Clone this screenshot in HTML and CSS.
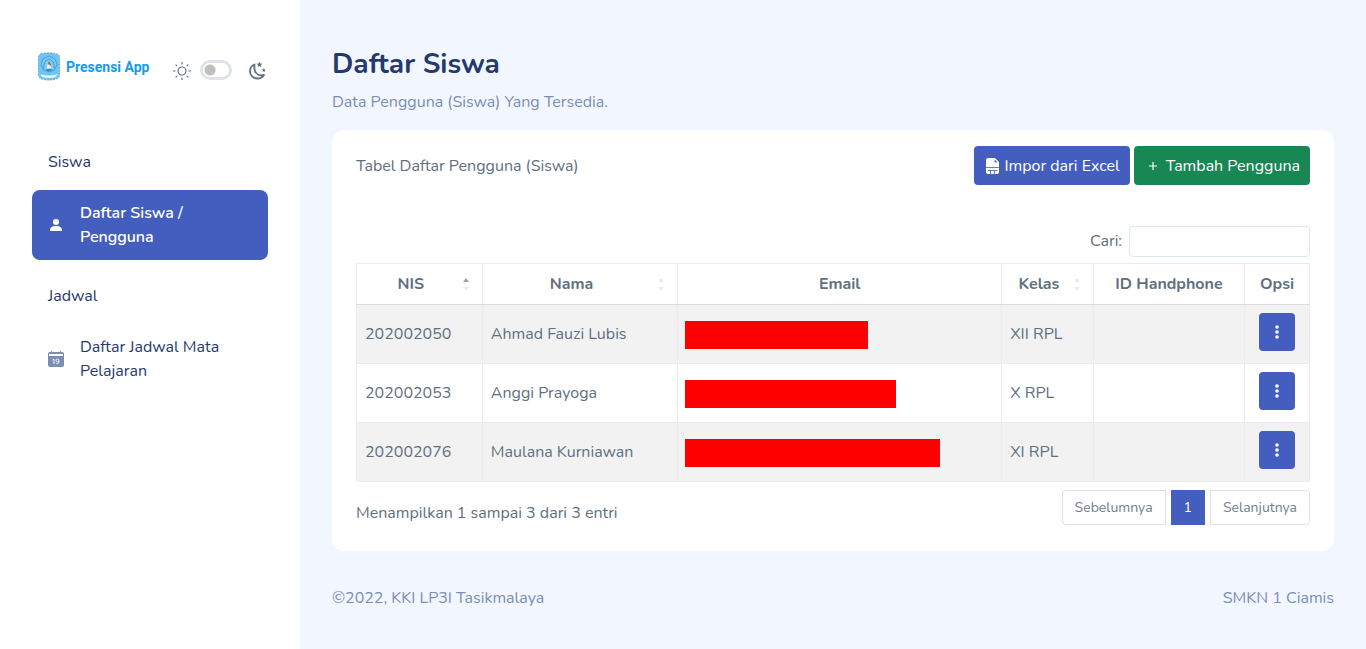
FILE: index.html
```
<!DOCTYPE html>
<html lang="id">
<head>
<meta charset="utf-8">
<meta name="viewport" content="width=device-width, initial-scale=1">
<title>Daftar Siswa - Presensi App</title>
<link rel="stylesheet" href="styles.css">
</head>
<body>
<div class="app">
  <aside class="sidebar">
    <div class="sidebar-header">
      <a class="brand" href="#">
        <svg class="brand-logo" viewBox="0 0 22 28" aria-hidden="true">
          <path d="M3 1.500Q11-.8 19 1.500 21.500 2 21.500 5V22Q21.500 26 17 26.800 11 28.400 5 26.800.5 26 .5 22V5Q.5 2 3 1.500Z" fill="#6cc6f7" stroke="#6f97ac" stroke-width=".8" stroke-dasharray="2 1"/>
          <path d="M11 3.500 17 6.500 19 12 16.500 17.500 11 19.500 5.500 17.500 3 12 5 6.500Z" fill="#7fcdf8" stroke="#3c9bd8" stroke-width=".9"/>
          <path d="M6 16Q4.500 9 11 6.500 17.500 9 16 16" fill="none" stroke="#3a8cc4" stroke-width=".9"/>
          <path d="M11 7.500 13.500 16H8.500Z" fill="#e8f3f5"/>
          <path d="M10 9h2v3h-2z" fill="#6f868c"/>
          <path d="M11.500 11h1.500v2h-1.500z" fill="#d65342"/>
          <path d="M7 17.500Q11 15 15 17.500L11 19Z" fill="#2b91d0"/>
          <path d="M2.500 21.500Q11 24.500 19.500 21.500L18 24.500Q11 26.500 4 24.500Z" fill="#e8f7fd"/>
        </svg>
        <span>Presensi App</span>
      </a>
      <div class="theme">
        <svg class="theme-icon" viewBox="0 0 20 20" aria-hidden="true">
          <circle cx="10" cy="11" r="4" fill="none" stroke="#607080" stroke-width="1.200"/>
          <path d="M10 2v2.500M10 17.500v2.500M1 11h2.500M16.500 11h2.500M3.600 4.600l1.600 1.600M14.800 15.800l1.600 1.600M3.600 17.400l1.600-1.600M14.800 6.200l1.600-1.600" stroke="#607080" stroke-width="1.200"/>
        </svg>
        <input class="switch" type="checkbox" role="switch" aria-label="Mode gelap">
        <svg class="theme-icon moon" viewBox="0 0 20 20" aria-hidden="true">
          <path d="M6.500 4.500C3.500 5.800 2 8.300 2 11.300 2 15.500 5.200 18.500 9.300 18.500c3 0 5.300-1.300 6.700-3.500-4.700 1-8.200-1-9.200-4.600-.5-2-.5-4-.3-5.900Z" fill="none" stroke="#607080" stroke-width="1.800" stroke-linejoin="round"/>
          <path d="m11.500 1.500.8 2.100 2.200.1-1.700 1.400.6 2.200-1.900-1.200-1.900 1.200.6-2.200-1.700-1.400 2.200-.1ZM15.800 8l.6 1.400 1.500.1-1.200 1 .4 1.500-1.300-.8-1.300.8.4-1.500-1.200-1 1.500-.1Z" fill="#607080"/>
        </svg>
      </div>
    </div>
    <nav class="menu">
      <h2 class="menu-title">Siswa</h2>
      <a class="menu-item active" href="#" aria-current="page">
        <svg class="menu-icon" viewBox="0 0 16 16" aria-hidden="true">
          <circle cx="8" cy="5" r="3" fill="currentColor"/>
          <path d="M2 14C1.500 11 3.500 9 8 9S14.500 11 14 14Z" fill="currentColor"/>
        </svg>
        <span>Daftar Siswa / Pengguna</span>
      </a>
      <h2 class="menu-title">Jadwal</h2>
      <a class="menu-item" href="#">
        <svg class="menu-icon" viewBox="0 0 16 16" aria-hidden="true">
          <path d="M3 0h1v1h8V0h1v1h1q2 0 2 2H0Q0 1 2 1h1ZM0 5h16v9q0 2-2 2H2q-2 0-2-2ZM0 2h1v4H0ZM15 2h1v4h-1Z" fill="currentColor"/>
          <path d="M4.500 9 6 8v5" fill="none" stroke="#fff" stroke-width=".9"/>
          <circle cx="9.500" cy="9.400" r="1.400" fill="none" stroke="#fff" stroke-width=".8"/>
          <path d="M11 9.500q.2 3.500-1.600 3.300-1 0-1.300-.9" fill="none" stroke="#fff" stroke-width=".8"/>
        </svg>
        <span>Daftar Jadwal Mata Pelajaran</span>
      </a>
    </nav>
  </aside>

  <main class="main">
    <h1 class="page-title">Daftar Siswa</h1>
    <p class="page-subtitle">Data Pengguna (Siswa) Yang Tersedia.</p>

    <section class="card">
      <header class="card-header">
        <span>Tabel Daftar Pengguna (Siswa)</span>
        <div class="actions">
          <button class="btn btn-primary" type="button">
            <svg class="btn-icon" viewBox="0 0 14 16" aria-hidden="true">
              <path d="M2 0h7l4 4v10q0 2-2 2H2q-2 0-2-2V2Q0 0 2 0Z" fill="currentColor"/>
              <path d="M8.500 1.500v2q0 1 1 1h2Z" fill="#435ebe"/>
              <path d="M0 9.500h13M2 12.500h9.500M4.500 12.500V16M8.500 12.500V16" stroke="#435ebe" stroke-width=".8"/>
            </svg>
            Impor dari Excel
          </button>
          <button class="btn btn-success" type="button">
            <svg class="btn-icon" viewBox="0 0 14 16" aria-hidden="true">
              <path d="M7 4v8M3 8h8" stroke="currentColor" stroke-width="1.200"/>
            </svg>
            Tambah Pengguna
          </button>
        </div>
      </header>

      <div class="card-body">
        <div class="search">
          <label for="search">Cari:</label>
          <input id="search" class="search-input" type="search">
        </div>

        <table class="table">
          <colgroup>
            <col class="col-nis"><col class="col-name"><col class="col-email"><col class="col-class"><col class="col-phone"><col class="col-option">
          </colgroup>
          <thead>
            <tr>
              <th scope="col" class="sortable asc" aria-sort="ascending"><span class="sort">NIS<span class="arrows"></span></span></th>
              <th scope="col" class="sortable"><span class="sort">Nama<span class="arrows"></span></span></th>
              <th scope="col">Email</th>
              <th scope="col" class="sortable"><span class="sort">Kelas<span class="arrows"></span></span></th>
              <th scope="col">ID Handphone</th>
              <th scope="col">Opsi</th>
            </tr>
          </thead>
          <tbody>
            <tr>
              <td>202002050</td>
              <td>Ahmad Fauzi Lubis</td>
              <td class="email"><div class="redacted redacted-short"></div></td>
              <td>XII RPL</td>
              <td></td>
              <td class="option"><button class="btn btn-primary btn-more" type="button" aria-label="Opsi"><svg class="dots" viewBox="0 0 4 14" aria-hidden="true"><circle cx="2" cy="2" r="1.800"/><circle cx="2" cy="7" r="1.800"/><circle cx="2" cy="12" r="1.800"/></svg></button></td>
            </tr>
            <tr>
              <td>202002053</td>
              <td>Anggi Prayoga</td>
              <td class="email"><div class="redacted redacted-medium"></div></td>
              <td>X RPL</td>
              <td></td>
              <td class="option"><button class="btn btn-primary btn-more" type="button" aria-label="Opsi"><svg class="dots" viewBox="0 0 4 14" aria-hidden="true"><circle cx="2" cy="2" r="1.800"/><circle cx="2" cy="7" r="1.800"/><circle cx="2" cy="12" r="1.800"/></svg></button></td>
            </tr>
            <tr>
              <td>202002076</td>
              <td>Maulana Kurniawan</td>
              <td class="email"><div class="redacted redacted-long"></div></td>
              <td>XI RPL</td>
              <td></td>
              <td class="option"><button class="btn btn-primary btn-more" type="button" aria-label="Opsi"><svg class="dots" viewBox="0 0 4 14" aria-hidden="true"><circle cx="2" cy="2" r="1.800"/><circle cx="2" cy="7" r="1.800"/><circle cx="2" cy="12" r="1.800"/></svg></button></td>
            </tr>
          </tbody>
        </table>

        <div class="table-footer">
          <p class="info">Menampilkan 1 sampai 3 dari 3 entri</p>
          <nav class="pagination" aria-label="Halaman">
            <a class="page first" href="#">Sebelumnya</a>
            <a class="page current" href="#" aria-current="page">1</a>
            <a class="page last" href="#">Selanjutnya</a>
          </nav>
        </div>
      </div>
    </section>

    <footer class="footer">
      <p>©2022, KKI LP3I Tasikmalaya</p>
      <p>SMKN 1 Ciamis</p>
    </footer>
  </main>
</div>
</body>
</html>
```
FILE: styles.css
```
* { box-sizing: border-box; }

body {
  margin: 0;
  background: #f2f7ff;
  color: #607080;
  font: 400 16px/24px Nunito, "Open Sans", "Noto Sans", sans-serif;
}

h1, h2, p { margin: 0; }
a { color: inherit; text-decoration: none; }
button, input { font: inherit; }

.app { display: flex; min-height: 100vh; }

/* Sidebar */
.sidebar { flex: 0 0 300px; padding: 52px 32px 32px; background: #fff; }
.sidebar-header { display: flex; align-items: flex-start; justify-content: space-between; padding-left: 6px; }
.brand {
  display: flex; align-items: center; gap: 6px;
  color: #159aef;
  font: 700 14px/28px Roboto, sans-serif;
  white-space: nowrap;
}
.brand-logo { width: 22px; height: 29px; }
.theme { display: flex; align-items: center; gap: 8px; padding-top: 8px; }
.theme-icon { width: 20px; height: 20px; }
.moon { margin-left: 8px; }
.switch {
  appearance: none;
  width: 32px; height: 20px; margin: 0;
  border: 3px solid #dfe3ea; border-radius: 10px;
  background: radial-gradient(circle at 7px 50%, #bfbfbf 5px, #fff 6px);
}
.menu { margin-top: 65px; }
.menu-title {
  padding: 4px 16px;
  color: #25396f;
  font-size: 16px; font-weight: 400; line-height: 24px;
}
.menu-item + .menu-title { margin-top: 20px; }
.menu-item {
  display: flex; align-items: center; gap: 16px;
  margin-top: 12px; padding: 11px 16px;
  border-radius: 8px;
  color: #25396f;
}
.menu-icon { flex: none; width: 16px; height: 16px; color: #7c8db5; }
.menu-item.active { background: #435ebe; color: #fff; font-weight: 600; }
.active .menu-icon { color: #fff; }

/* Content */
.main { flex: 1; min-width: 0; padding: 47px 32px 32px; }
.page-title { color: #25396f; font-size: 28px; font-weight: 700; line-height: 34px; }
.page-subtitle { margin-top: 9px; color: #7c8db5; }
.card { margin-top: 16px; padding: 16px 24px 26px; border-radius: 12px; background: #fff; }
.card-header { display: flex; align-items: center; justify-content: space-between; }
.actions { display: flex; gap: 4px; }

.btn {
  display: inline-flex; align-items: center; justify-content: center; gap: 4px;
  padding: 8px 10px 7px 12px;
  border: 0; border-radius: 4px;
  color: #fff; white-space: nowrap;
}
.btn-primary { background: #435ebe; }
.btn-success { gap: 6px; background: #198754; }
.btn-icon { width: 14px; height: 16px; }

.card-body { padding-top: 41px; }
.search { display: flex; align-items: flex-start; justify-content: flex-end; gap: 7px; }
.search label { padding-top: 3px; }
.search-input {
  width: 181px; height: 31px; padding: 4px 8px;
  border: 1px solid #dce7f1; border-radius: 4px;
  background: #fff; color: inherit; appearance: none;
}

.table { width: 100%; margin-top: 6px; border-collapse: collapse; table-layout: fixed; }
.col-nis { width: 13.2%; }
.col-name { width: 20.5%; }
.col-email { width: 34%; }
.col-class { width: 9.6%; }
.col-phone { width: 15.9%; }
.col-option { width: 6.8%; }
.table th, .table td { padding: 8px; border: 1px solid #ececec; }
.table th { font-weight: 700; text-align: center; }
.table thead tr { border-bottom: 1px solid #dcdcdc; }
.table thead th { border-bottom-color: #dcdcdc; }
.table tbody tr:nth-child(odd) { background: #f2f2f2; }
.table .sortable { padding-right: 13px; }
.sort { display: flex; align-items: center; }
.sort::before { content: ""; flex: 1; }
.arrows { flex: 1; display: flex; flex-direction: column; align-items: flex-end; gap: 5px; padding-left: 12px; }
.arrows::before, .arrows::after { content: ""; border: 3px solid transparent; }
.arrows::before { border-top: 0; border-bottom: 4px solid #e8eaec; }
.arrows::after { border-bottom: 0; border-top: 4px solid #e8eaec; }
.asc .arrows::before { border-bottom-color: #98a1aa; }
.redacted { height: 28px; background: #f00; }
.table .email { padding: 8px 5px 6px 7px; }
.redacted-short { width: 183px; }
.redacted-medium { width: 211px; }
.redacted-long { width: 255px; }
.table .option { padding: 8px 4px 12px; text-align: center; }
.btn-more { width: 36px; height: 38px; padding: 0; vertical-align: top; }
.dots { width: 4px; height: 14px; fill: currentColor; }

.table-footer { display: flex; align-items: flex-start; justify-content: space-between; padding-top: 8px; }
.info { padding-top: 11px; }
.pagination { display: flex; gap: 5px; font-size: 14px; line-height: 21px; }
.page { padding: 6px 12px; border: 1px solid #dee2e6; background: #fff; color: #727e8b; }
.first { border-radius: 4px 0 0 4px; }
.last { border-radius: 0 4px 4px 0; }
.current { border-color: #435ebe; background: #435ebe; color: #fff; }

.footer { display: flex; justify-content: space-between; margin-top: 35px; color: #7c8db5; }
```
